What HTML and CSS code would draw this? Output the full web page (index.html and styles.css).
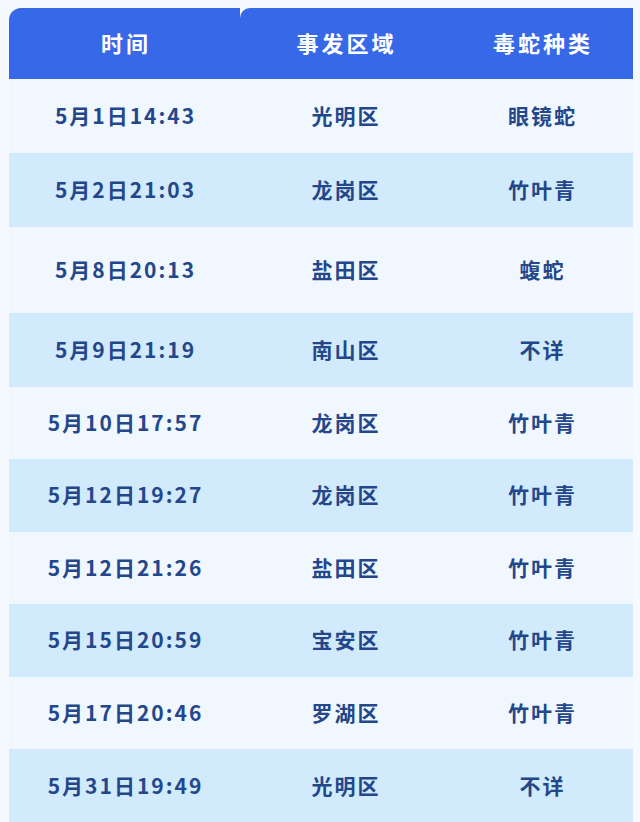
FILE: index.html
```html
<!DOCTYPE html>
<html lang="zh-CN">
<head>
<meta charset="utf-8">
<title>毒蛇咬伤记录</title>
<link rel="stylesheet" href="styles.css">
</head>
<body>
<div class="page">
  <div class="table">
    <div class="head">
      <div class="hcell hcell-first">时间</div>
      <div class="hcell hcell-second">事发区域</div>
      <div class="hcell">毒蛇种类</div>
    </div>
    <div class="row light"><div class="cell time">5月1日14:43</div><div class="cell">光明区</div><div class="cell">眼镜蛇</div></div>
    <div class="row dark"><div class="cell time">5月2日21:03</div><div class="cell">龙岗区</div><div class="cell">竹叶青</div></div>
    <div class="row light tall"><div class="cell time">5月8日20:13</div><div class="cell">盐田区</div><div class="cell">蝮蛇</div></div>
    <div class="row dark"><div class="cell time">5月9日21:19</div><div class="cell">南山区</div><div class="cell">不详</div></div>
    <div class="row light short"><div class="cell time">5月10日17:57</div><div class="cell">龙岗区</div><div class="cell">竹叶青</div></div>
    <div class="row dark mid"><div class="cell time">5月12日19:27</div><div class="cell">龙岗区</div><div class="cell">竹叶青</div></div>
    <div class="row light short"><div class="cell time">5月12日21:26</div><div class="cell">盐田区</div><div class="cell">竹叶青</div></div>
    <div class="row dark mid"><div class="cell time">5月15日20:59</div><div class="cell">宝安区</div><div class="cell">竹叶青</div></div>
    <div class="row light short"><div class="cell time">5月17日20:46</div><div class="cell">罗湖区</div><div class="cell">竹叶青</div></div>
    <div class="row dark"><div class="cell time">5月31日19:49</div><div class="cell">光明区</div><div class="cell">不详</div></div>
  </div>
</div>
</body>
</html>
```
FILE: styles.css
```css
html, body {
  margin: 0;
  padding: 0;
  background: #f6f9fd;
}
body {
  font-family: "Noto Sans CJK SC", "Noto Sans", sans-serif;
  font-weight: 700;
}
.page {
  padding: 8px 7px 0 9px;
}
.table {
  width: 624px;
}
.head, .row {
  display: grid;
  grid-template-columns: 231px 210px 183px;
}
.head {
  height: 71px;
}
.hcell {
  display: flex;
  align-items: center;
  justify-content: center;
  background: #3668e8;
  color: #ffffff;
  font-size: 22px;
  letter-spacing: 3px;
  padding-left: 3px;
  padding-bottom: 4px;
}
.hcell-first {
  border-top-left-radius: 12px;
}
.hcell-second {
  border-top-left-radius: 10px;
}
.row {
  height: 74px;
}
.row.tall { height: 86px; }
.row.short { height: 72px; }
.row.mid { height: 73px; }
.light { background: #f0f7fe; }
.dark { background: #d1eafc; }
.cell {
  display: flex;
  align-items: center;
  justify-content: center;
  color: #23478a;
  font-size: 21px;
  letter-spacing: 2px;
  padding-left: 2px;
  padding-bottom: 3px;
}
```
